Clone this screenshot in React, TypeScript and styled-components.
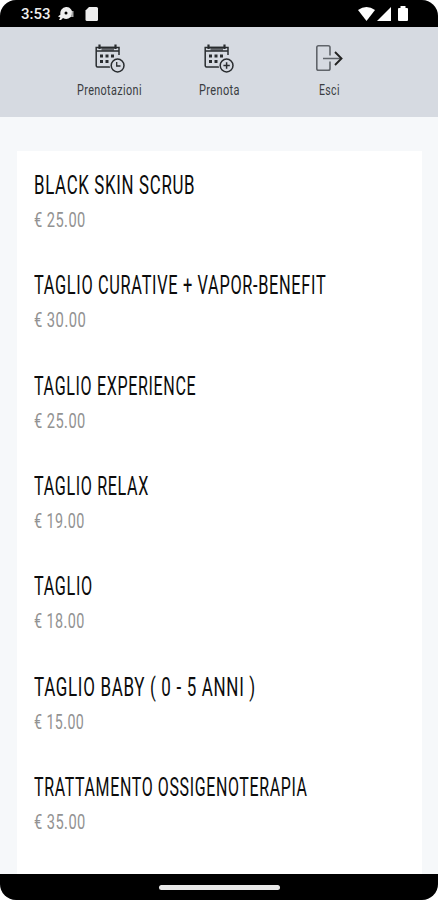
import React, { useLayoutEffect, useRef, useState } from "react";
import styled, { createGlobalStyle } from "styled-components";

const GlobalStyle = createGlobalStyle`
  * { box-sizing: border-box; }
  body { margin: 0; background: #fff; font-family: Roboto, "Liberation Sans", sans-serif; }
`;

const Screen = styled.div`
  width: 438px;
  height: 900px;
  display: flex;
  flex-direction: column;
  overflow: hidden;
  border-radius: 16px;
  background: #f6f8fa;
`;

const StatusBar = styled.header`
  flex: none;
  height: 27px;
  padding: 0 29px 0 21px;
  display: flex;
  align-items: center;
  justify-content: space-between;
  background: #000;
`;

const StatusGroup = styled.div<{ $gap: number }>`
  display: flex;
  align-items: center;
  gap: ${(p) => p.$gap}px;
  svg { display: block; }
`;

const Clock = styled.span`
  width: 30px;
  color: #eee;
  font-size: 15.5px;
  font-weight: 500;
  line-height: 27px;
  padding-top: 2px;
`;

const NavBar = styled.nav`
  flex: none;
  height: 90px;
  padding: 15px 54px 0 55px;
  display: grid;
  grid-template-columns: repeat(3, 1fr);
  background: #d6dae1;
`;

const NavItem = styled.a`
  display: flex;
  flex-direction: column;
  align-items: center;
  svg { display: block; }
`;

const NavLabel = styled.span`
  display: block;
  margin-top: 6px;
  color: #3a3d41;
  font-size: 15px;
  letter-spacing: 0.5px;
  line-height: 20px;
`;

const Content = styled.main`
  flex: 1;
  min-height: 0;
  padding: 34px 16px 0 17px;
  display: flex;
`;

const Card = styled.ul`
  flex: 1;
  margin: 0;
  padding: 18px 17px 0;
  list-style: none;
  background: #fff;
`;

const Service = styled.li`
  height: 100.33px;
`;

const ServiceName = styled.h2`
  margin: 0;
  color: #0c0c0c;
  font-size: 25px;
  font-weight: 400;
  letter-spacing: 1px;
  line-height: 34px;
`;

const Price = styled.p`
  margin: 2px 0 0;
  color: #929292;
  font-size: 20px;
  letter-spacing: 0.6px;
  line-height: 30px;
`;

const HomeBar = styled.footer`
  flex: none;
  height: 26px;
  display: flex;
  align-items: center;
  justify-content: center;
  background: #000;
`;

const HomeHandle = styled.div`
  width: 121px;
  height: 5px;
  border-radius: 3px;
  background: #e8e8e8;
`;

const FitBox = styled.span<{ $width: number }>`
  display: block;
  width: ${(p) => p.$width}px;
  white-space: nowrap;
`;

const FitInner = styled.span`
  display: inline-block;
  transform-origin: 0 50%;
`;

/* Condenses one line of text to a given width. */
function Fit({ width, children }: { width: number; children: string }) {
  const ref = useRef<HTMLSpanElement>(null);
  const [scale, setScale] = useState(1);
  useLayoutEffect(() => {
    if (ref.current) setScale(width / ref.current.offsetWidth);
  }, [width, children]);
  return (
    <FitBox $width={width}>
      <FitInner ref={ref} style={{ transform: `scaleX(${scale})` }}>
        {children}
      </FitInner>
    </FitBox>
  );
}

function CalendarIcon({ badge }: { badge: "clock" | "plus" }) {
  return (
    <svg width="32" height="32" viewBox="0 0 32 32" fill="none" stroke="#292c2f">
      <path d="M18 25H3.5Q2.2 25 2.2 23.5V5.5H25V13" strokeWidth="1.5" />
      <path d="M6 5.5H21M2.5 9H25" strokeWidth="1.4" />
      <path d="M7.5 7.3H20" strokeWidth="3" opacity=".65" />
      <path d="M5.5 2.5V7M21.5 2.5V7" strokeWidth="2.2" />
      <path d="M6 14H9M11.5 14H14.5M17 14H20M6 19.5H9M11.5 19.5H14.5" strokeWidth="3" />
      <circle cx="23.6" cy="23.5" r="8" fill="#d6dae1" stroke="none" />
      <circle cx="23.6" cy="23.5" r="6.4" strokeWidth="1.5" />
      {badge === "clock" ? (
        <path d="M22.7 20V24H26.5" strokeWidth="1.3" />
      ) : (
        <path d="M23.6 20.3V26.7M20.4 23.5H26.8" strokeWidth="1.5" />
      )}
    </svg>
  );
}

function ExitIcon() {
  return (
    <svg width="32" height="32" viewBox="0 0 32 32" fill="none">
      <path d="M17 13.5V5.5Q17 3.7 15.3 3.7H5.5Q3.8 3.7 3.8 5.5V26.5Q3.8 28.3 5.5 28.3H15.3Q17 28.3 17 26.5V19.5" stroke="#60646a" strokeWidth="1.6" />
      <path d="M10 16.5H28" stroke="#60646a" strokeWidth="1.6" />
      <path d="M22 10L28.5 16.5L22 23" stroke="#222" strokeWidth="1.9" />
    </svg>
  );
}

const services = [
  { name: "BLACK SKIN SCRUB", width: 161, price: "€ 25.00", priceWidth: 52 },
  { name: "TAGLIO CURATIVE + VAPOR-BENEFIT", width: 292, price: "€ 30.00", priceWidth: 52.5 },
  { name: "TAGLIO EXPERIENCE", width: 162, price: "€ 25.00", priceWidth: 52 },
  { name: "TAGLIO RELAX", width: 115, price: "€ 19.00", priceWidth: 51 },
  { name: "TAGLIO", width: 59, price: "€ 18.00", priceWidth: 51 },
  { name: "TAGLIO BABY ( 0 - 5 ANNI )", width: 222, price: "€ 15.00", priceWidth: 50.5 },
  { name: "TRATTAMENTO OSSIGENOTERAPIA", width: 274, price: "€ 35.00", priceWidth: 52 },
];

export default function App() {
  return (
    <>
      <GlobalStyle />
      <Screen>
        <StatusBar>
          <StatusGroup $gap={7}>
            <Clock><Fit width={30}>3:53</Fit></Clock>
            <svg width="17" height="14" viewBox="0 0 17 14">
              <path fill="#eee" fillRule="evenodd" d="M8 0A6 6 0 1 1 5 11L3 13H1L2.3 10.5L0 9.5L2.5 7.5A6 6 0 0 1 8 0ZM8 4.5A1.5 1.5 0 1 0 8 7.5A1.5 1.5 0 0 0 8 4.5Z" />
              <path fill="#aaa" d="M14 4H15.5V10H13Z" />
            </svg>
            <svg width="26" height="16" viewBox="0 0 26 16">
              <path fill="#eee" d="M7 1H14.5Q16 1 16 2.5V13.5Q16 15 14.5 15H5Q3.5 15 3.5 13.5V4.5Z" />
            </svg>
          </StatusGroup>
          <svg width="51" height="16" viewBox="0 0 51 16" fill="#fff">
            <path d="M0 4Q8.5 -2 17 4L8.5 15Z" />
            <path d="M33 1V15H19Z" />
            <path d="M42.5 0H47.5V2H49Q50 2 50 3V14Q50 15 49 15H41Q40 15 40 14V3Q40 2 41 2H42.5Z" />
          </svg>
        </StatusBar>
        <NavBar>
          <NavItem>
            <CalendarIcon badge="clock" />
            <NavLabel><Fit width={65}>Prenotazioni</Fit></NavLabel>
          </NavItem>
          <NavItem>
            <CalendarIcon badge="plus" />
            <NavLabel><Fit width={41}>Prenota</Fit></NavLabel>
          </NavItem>
          <NavItem>
            <ExitIcon />
            <NavLabel><Fit width={21}>Esci</Fit></NavLabel>
          </NavItem>
        </NavBar>
        <Content>
          <Card>
            {services.map((s) => (
              <Service key={s.name}>
                <ServiceName><Fit width={s.width}>{s.name}</Fit></ServiceName>
                <Price><Fit width={s.priceWidth}>{s.price}</Fit></Price>
              </Service>
            ))}
          </Card>
        </Content>
        <HomeBar><HomeHandle /></HomeBar>
      </Screen>
    </>
  );
}
